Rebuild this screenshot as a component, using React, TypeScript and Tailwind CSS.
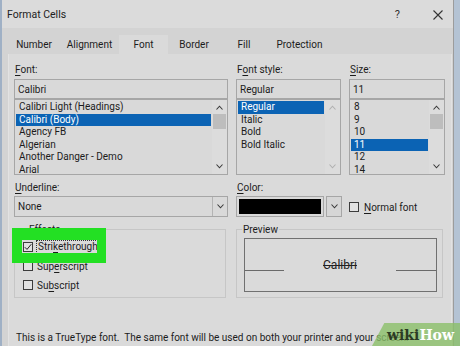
import React from "react";

function U({ children }: { children: React.ReactNode }) {
  return <span className="underline decoration-[1px] underline-offset-[1.5px]">{children}</span>;
}

function ChevUp({ c = "#3a3a3a" }: { c?: string }) {
  return (
    <svg width="7" height="5" viewBox="0 0 7 5">
      <polyline points="0.5,4.5 3.5,1.2 6.5,4.5" fill="none" stroke={c} strokeWidth="1.1" />
    </svg>
  );
}
function ChevDown({ c = "#3a3a3a" }: { c?: string }) {
  return (
    <svg width="7" height="5" viewBox="0 0 7 5">
      <polyline points="0.5,0.5 3.5,3.8 6.5,0.5" fill="none" stroke={c} strokeWidth="1.1" />
    </svg>
  );
}

function ListBox({
  items,
  sel,
  thumb,
  arrow,
}: {
  items: string[];
  sel: number;
  thumb: boolean;
  arrow: string;
}) {
  return (
    <div className="flex h-[76px] overflow-hidden border border-[#a6a6a6] bg-[#d9d9d9]">
      <div className="flex-1 pl-px pr-px pt-px">
        {items.map((t, i) => (
          <div
            key={i}
            className={
              i === sel
                ? "h-[12.6px] whitespace-nowrap bg-[#0b63b4] pl-[3px] leading-[12.6px] text-white"
                : "h-[12.6px] whitespace-nowrap pl-[3px] leading-[12.6px]"
            }
          >
            {t}
          </div>
        ))}
      </div>
      <div className="flex w-[15px] flex-col items-center bg-[#dcdcdc] pt-[5px]">
        <ChevUp c={arrow} />
        {thumb ? (
          <div className="mt-[4px] h-[15px] w-[13px] bg-[#bdbdbd]" />
        ) : (
          <div className="mt-[4px] h-[15px] w-[13px]" />
        )}
        <div className="flex-1" />
        <div className="pb-[5px]">
          <ChevDown c={arrow} />
        </div>
      </div>
    </div>
  );
}

function Input({ text }: { text: string }) {
  return (
    <div className="flex h-[20px] items-center border border-[#a6a6a6] bg-[#d9d9d9] pl-[3px]">{text}</div>
  );
}

function Check({ checked }: { checked?: boolean }) {
  return (
    <div className="flex h-[10px] w-[10px] shrink-0 items-center justify-center border border-[#3c3c3c] bg-[#e2e2e2]">
      {checked ? (
        <svg width="8" height="8" viewBox="0 0 8 8">
          <polyline points="0.8,4.2 3,6.4 7.3,1.2" fill="none" stroke="#222" strokeWidth="1" />
        </svg>
      ) : null}
    </div>
  );
}

export default function App() {
  return (
    <div className="relative flex h-[346px] w-[460px] overflow-hidden bg-[#b3c2d3] font-['Roboto',sans-serif] text-[10px] text-[#1c1c1c]">
      <div className="w-[2px] bg-[#9fb0c5]" />
      <div className="flex w-[452px] flex-col border-r border-[#9c9c9c] bg-[#d3d3d3]">
        {/* title bar */}
        <div className="flex h-[28px] items-center bg-[#dbdbdb] pl-[5px] pt-[2px]">
          <div className="text-[10.5px] text-[#222]">Format Cells</div>
          <div className="flex-1" />
          <div className="mr-[33px] text-[11px] text-[#333]">?</div>
          <div className="mr-[10px]">
            <svg width="10" height="10" viewBox="0 0 10 10">
              <path d="M0.5 0.5 L9.5 9.5 M9.5 0.5 L0.5 9.5" stroke="#333" strokeWidth="1.1" />
            </svg>
          </div>
        </div>
        {/* tabs */}
        <div className="flex h-[26px] items-end pl-[6px] text-[10px]">
          <div className="flex h-[19px] w-[52px] items-center justify-center">Number</div>
          <div className="flex h-[19px] w-[59px] items-center justify-center">Alignment</div>
          <div className="flex h-[19px] w-[49px] items-center justify-center bg-[#dadada]">Font</div>
          <div className="flex h-[19px] w-[52px] items-center justify-center">Border</div>
          <div className="flex h-[19px] w-[48px] items-center justify-center">Fill</div>
          <div className="flex h-[19px] w-[63px] items-center justify-center">Protection</div>
        </div>
        {/* panel */}
        <div className="ml-[6px] mr-[1px] flex-1 border-l border-r border-[#e2e2e2] bg-[#dadada] pl-[5px] pt-[9px]">
          <div className="grid grid-cols-[214px_105px_96px] gap-x-[8px]">
            {/* row 1 */}
            <div className="flex flex-col">
              <div className="mb-[3px] h-[13px] pl-px leading-[13px]">
                <U>F</U>ont:
              </div>
              <Input text="Calibri" />
              <ListBox
                items={[
                  "Calibri Light (Headings)",
                  "Calibri (Body)",
                  "Agency FB",
                  "Algerian",
                  "Another Danger - Demo",
                  "Arial",
                ]}
                sel={1}
                thumb={true}
                arrow="#3a3a3a"
              />
            </div>
            <div className="flex flex-col">
              <div className="mb-[3px] h-[13px] pl-px leading-[13px]">
                F<U>o</U>nt style:
              </div>
              <Input text="Regular" />
              <ListBox items={["Regular", "Italic", "Bold", "Bold Italic"]} sel={0} thumb={false} arrow="#b0b0b0" />
            </div>
            <div className="flex flex-col">
              <div className="mb-[3px] h-[13px] pl-px leading-[13px]">
                <U>S</U>ize:
              </div>
              <Input text="11" />
              <ListBox items={["8", "9", "10", "11", "12", "14"]} sel={3} thumb={true} arrow="#3a3a3a" />
            </div>

            {/* row 2 */}
            <div className="mt-[6px] flex flex-col">
              <div className="mb-[2px] h-[13px] pl-px leading-[13px]">
                <U>U</U>nderline:
              </div>
              <div className="flex h-[21px] items-center border border-[#a6a6a6] bg-[#d9d9d9]">
                <div className="flex-1 pl-[3px]">None</div>
                <div className="flex h-full w-[15px] items-center justify-center border-l border-[#b4b4b4]">
                  <ChevDown />
                </div>
              </div>
            </div>
            <div className="mt-[6px] flex flex-col">
              <div className="mb-[2px] h-[13px] pl-px leading-[13px]">
                <U>C</U>olor:
              </div>
              <div className="flex h-[21px] w-[106px] items-stretch">
                <div className="flex w-[88px] items-center border border-[#a6a6a6] bg-[#d9d9d9] p-[2px]">
                  <div className="h-full w-full bg-black" />
                </div>
                <div className="ml-[2px] flex w-[16px] items-center justify-center border border-[#a6a6a6] bg-[#d6d6d6]">
                  <ChevDown />
                </div>
              </div>
            </div>
            <div className="mt-[6px] flex flex-col">
              <div className="mb-[2px] h-[13px]" />
              <div className="flex h-[21px] items-center gap-[5px] pt-px">
                <Check />
                <div>
                  <U>N</U>ormal font
                </div>
              </div>
            </div>

            {/* row 3 */}
            <fieldset className="mt-[6px] h-[75px] w-[212px] border border-[#c6c6c6] pb-0 pl-[8px] pr-0 pt-[3px]">
              <legend className="ml-[5px] h-[13px] px-px leading-[13px]">Effects</legend>
              <div className="flex flex-col gap-[3px]">
                <div className="flex h-[16px] items-center">
                  <Check checked />
                  <div className="ml-[3px] border border-dotted border-[#333] px-px leading-[12px]">
                    Stri<U>k</U>ethrough
                  </div>
                </div>
                <div className="flex h-[16px] items-center">
                  <Check />
                  <div className="ml-[4px]">
                    Sup<U>e</U>rscript
                  </div>
                </div>
                <div className="flex h-[16px] items-center">
                  <Check />
                  <div className="ml-[4px]">
                    Su<U>b</U>script
                  </div>
                </div>
              </div>
            </fieldset>
            <fieldset className="col-span-2 mt-[6px] h-[75px] w-[207px] border border-[#c6c6c6] px-0 pb-0 pt-[2px]">
              <legend className="ml-[5px] h-[13px] px-px leading-[13px]">Preview</legend>
              <div className="ml-[7px] flex h-[54px] w-[193px] items-center border border-[#707070]">
                <div className="mt-[10px] h-px w-[39px] bg-[#6a6a6a]" />
                <div className="flex-1 text-center text-[12px] text-[#222] line-through">Calibri</div>
                <div className="mt-[10px] h-px w-[40px] bg-[#6a6a6a]" />
              </div>
            </fieldset>
          </div>
          <div className="mt-[33px] whitespace-nowrap pl-[2px] leading-[13px]">
            This is a TrueType font.&nbsp; The same font will be used on both your printer and your screen.
          </div>
        </div>
      </div>
      <div className="w-[6px] bg-[#b4c3d4]" />

      {/* highlight */}
      <div className="absolute left-[12px] top-[228px] h-[35px] w-[94px] border-b-[10px] border-l-[10px] border-r-[9px] border-t-[12px] border-[#23e023]" />

      {/* watermark */}
      <div className="absolute bottom-0 right-0 h-[23px] w-[88px] bg-[#8bbf69]/80 [clip-path:polygon(14%_0,100%_0,100%_100%,0_100%)]" />
      <div className="absolute bottom-[1px] right-[6px] flex items-baseline font-['DejaVu_Serif',serif] text-[14px] font-bold leading-[20px]">
        <span className="text-[#2c3b24]">wiki</span>
        <span className="text-white">How</span>
      </div>
    </div>
  );
}
